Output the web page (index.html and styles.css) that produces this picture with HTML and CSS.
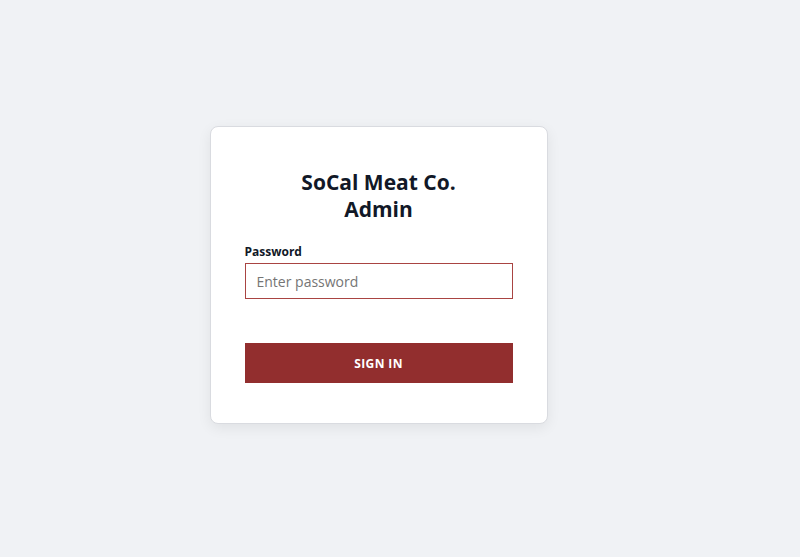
FILE: index.html
```html
<!DOCTYPE html>
<html lang="en">
<head>
<meta charset="utf-8">
<title>SoCal Meat Co. Admin</title>
<link rel="stylesheet" href="styles.css">
</head>
<body>
<main class="page">
  <form class="card">
    <h1 class="title">SoCal Meat Co.<br>Admin</h1>
    <label class="label" for="pw">Password</label>
    <input class="input" id="pw" type="password" placeholder="Enter password">
    <button class="button" type="button">SIGN IN</button>
  </form>
</main>
</body>
</html>
```
FILE: styles.css
```css
html, body {
  margin: 0;
  padding: 0;
  height: 100%;
}
body {
  background: #f0f2f5;
  font-family: "Open Sans", "Noto Sans", "Liberation Sans", sans-serif;
  color: #111827;
}
.page {
  min-height: 100%;
  box-sizing: border-box;
  display: flex;
  align-items: center;
  justify-content: center;
  padding-right: 43px;
  padding-bottom: 7px;
}
.card {
  width: 338px;
  box-sizing: border-box;
  background: #fff;
  border: 1px solid #d9dbe0;
  border-radius: 8px;
  box-shadow: 0 4px 14px rgba(0, 0, 0, 0.07);
  padding: 42px 34px 40px;
  display: flex;
  flex-direction: column;
}
.title {
  margin: 0 0 21px;
  text-align: center;
  font-size: 21px;
  line-height: 27px;
  font-weight: 700;
  color: #111827;
}
.label {
  font-size: 12px;
  font-weight: 700;
  line-height: 16px;
  margin-bottom: 3px;
}
.input {
  height: 36px;
  box-sizing: border-box;
  border: 1px solid #a94442;
  border-radius: 0;
  padding: 0 11px;
  font-family: inherit;
  font-size: 14px;
  color: #111827;
  outline: none;
  margin-bottom: 44px;
}
.input::placeholder {
  color: #757575;
}
.button {
  height: 40px;
  border: none;
  background: #922e2e;
  color: #fff;
  font-family: inherit;
  font-size: 12px;
  font-weight: 700;
  letter-spacing: 0.4px;
  cursor: pointer;
}
```
